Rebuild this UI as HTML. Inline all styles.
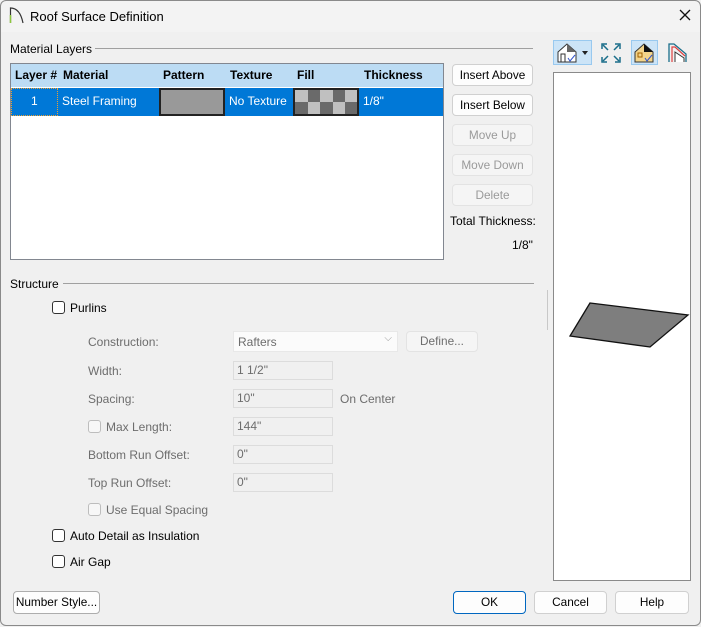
<!DOCTYPE html>
<html><head><style>
*{box-sizing:border-box}
body{margin:0;width:701px;height:626px;overflow:hidden;font-family:"Liberation Sans",sans-serif;font-size:12px;color:#000;background:#f0f0f0}
.win{position:absolute;left:1px;top:1px;width:701px;height:626px;background:#f0f0f0}
.frame{position:absolute;left:0;top:0;width:701px;height:626px;border:1px solid #8a8a8a;border-radius:6px;pointer-events:none}
.title{position:absolute;left:-1px;top:-1px;width:702px;height:32px;background:#f3f3f3}
.a{position:absolute;white-space:nowrap}
.btn{position:absolute;background:#fdfdfd;border:1px solid #d0d0d0;border-radius:4px;text-align:center;line-height:20px;font-size:11.8px}
.dis{color:#9a9a9a;background:#f5f5f5;border-color:#e3e3e3}
.g{color:#6d6d6d}
.inp{position:absolute;left:232px;width:100px;height:19px;border:1px solid #dcdcdc;background:#f0f0f0;color:#6d6d6d;padding-left:3px;line-height:17px}
.cb{position:absolute;width:13px;height:13px;border:1px solid #333;border-radius:3px;background:#fff}
.cbd{border-color:#bdbdbd;background:#f7f7f7}
.hd{position:absolute;top:67px;font-weight:bold}
.rw{position:absolute;top:93px;color:#fff}
</style></head><body><div class="win">
<div class="title"></div>
<svg class="a" style="left:8px;top:5px" width="16" height="18"><path d="M1.5 17V2 Q11 2 14 17" fill="none" stroke="#333" stroke-width="1.2"/><path d="M1.5 9V17" stroke="#8dc63f" stroke-width="1.5"/></svg>
<div class="a" style="left:29px;top:8px;font-size:13px">Roof Surface Definition</div>
<svg class="a" style="left:678px;top:8px" width="12" height="12"><path d="M1 1L11 11M11 1L1 11" stroke="#111" stroke-width="1.3"/></svg>

<div class="a" style="left:9px;top:41px">Material Layers</div>
<div class="a" style="left:94px;top:47px;width:438px;border-top:1px solid #a0a0a0"></div>
<div class="a" style="left:9px;top:62px;width:434px;height:197px;border:1px solid #828790;background:#fff"></div>
<div class="a" style="left:10px;top:63px;width:432px;height:23px;background:#bcdcf4"></div>
<div class="a" style="left:10px;top:87px;width:432px;height:28px;background:#0078d7"></div>
<div class="a" style="left:10px;top:87px;width:47px;height:28px;border:1px dotted #f0a030"></div>
<div class="hd" style="left:14px">Layer #</div><div class="hd" style="left:62px">Material</div><div class="hd" style="left:162px">Pattern</div><div class="hd" style="left:229px">Texture</div><div class="hd" style="left:296px">Fill</div><div class="hd" style="left:363px">Thickness</div>
<div class="rw" style="left:30px">1</div><div class="rw" style="left:61px">Steel Framing</div><div class="rw" style="left:228px">No Texture</div><div class="rw" style="left:362px">1/8"</div>
<div class="a" style="left:158px;top:87px;width:66px;height:28px;background:#999;border:2px solid #222"></div>
<svg class="a" style="left:292px;top:87px" width="66" height="28"><rect width="66" height="28" fill="#222"/><g transform="translate(2,2)"><rect width="62" height="24" fill="#c0c0c0"/><rect x="13" width="12" height="12" fill="#6a6a6a"/><rect x="38" width="12" height="12" fill="#6a6a6a"/><rect y="12" width="13" height="12" fill="#6a6a6a"/><rect x="25" y="12" width="13" height="12" fill="#6a6a6a"/><rect x="50" y="12" width="12" height="12" fill="#6a6a6a"/></g></svg>

<div class="btn" style="left:451px;top:63px;width:81px;height:22px">Insert Above</div>
<div class="btn" style="left:451px;top:93px;width:81px;height:22px">Insert Below</div>
<div class="btn dis" style="left:451px;top:123px;width:81px;height:22px">Move Up</div>
<div class="btn dis" style="left:451px;top:153px;width:81px;height:22px">Move Down</div>
<div class="btn dis" style="left:451px;top:183px;width:81px;height:22px">Delete</div>
<div class="a" style="left:449px;top:213px">Total Thickness:</div>
<div class="a" style="left:511px;top:237px">1/8"</div>

<div class="a" style="left:552px;top:39px;width:39px;height:25px;background:#cce4f7;border:1px solid #99c9ef"></div>
<svg class="a" style="left:555px;top:41px" width="38" height="22"><path d="M2 10L11 2L20 10V20H2Z" fill="#fff" stroke="#333"/><path d="M11 2L20 10H11Z" fill="#666"/><rect x="5" y="12" width="4" height="8" fill="none" stroke="#333"/><path d="M12 16L14 19L19 13" fill="none" stroke="#3355cc"/><path d="M26 9H32L29 13Z" fill="#222"/></svg>
<svg class="a" style="left:599px;top:41px" width="22" height="22"><g fill="none" stroke="#1a6e8a" stroke-width="1.5"><path d="M2 7V2H7M15 2H20V7M20 15V20H15M7 20H2V15"/><path d="M3 3L8 8M19 3L14 8M19 19L14 14M3 19L8 14"/></g></svg>
<div class="a" style="left:630px;top:39px;width:27px;height:25px;background:#cce4f7;border:1px solid #99c9ef"></div>
<svg class="a" style="left:632px;top:41px" width="24" height="22"><path d="M2 10L11 2L20 10V20H2Z" fill="#f3d48a" stroke="#333"/><path d="M11 2L20 10H11Z" fill="#111"/><rect x="5" y="11" width="4" height="4" fill="none" stroke="#a06000"/><path d="M12 16L14 19L19 13" fill="none" stroke="#3355cc"/></svg>
<svg class="a" style="left:665px;top:39px" width="24" height="24"><path d="M3 22V4H8L20 14V22" fill="none" stroke="#1a6e8a" stroke-width="1.3"/><path d="M6 22V7H9L19 16" fill="none" stroke="#e04040" stroke-width="1.2"/><path d="M9 22V12L18 18V22" fill="#fff" stroke="#333"/></svg>

<div class="a" style="left:552px;top:71px;width:138px;height:509px;background:#fff;border:1px solid #8a8a8a"></div>
<svg class="a" style="left:559px;top:294px" width="130" height="60"><path d="M30 8L128 20L90 52L10 41Z" fill="#7e7e7e" stroke="#111" stroke-width="1.3"/></svg>
<div class="a" style="left:546px;top:289px;height:40px;border-left:1px solid #c8c8c8"></div>

<div class="a" style="left:9px;top:276px">Structure</div>
<div class="a" style="left:62px;top:282px;width:471px;border-top:1px solid #a0a0a0"></div>
<div class="cb" style="left:51px;top:300px"></div><div class="a" style="left:69px;top:300px">Purlins</div>
<div class="a g" style="left:87px;top:334px">Construction:</div>
<div class="a" style="left:232px;top:330px;width:165px;height:21px;background:#fbfbfb;border:1px solid #e8e8e8;color:#6d6d6d;padding:3px 4px">Rafters<span style="position:absolute;right:5px;top:1px;font-size:10px;color:#999">⌵</span></div>
<div class="btn dis" style="left:405px;top:330px;width:72px;height:21px;color:#6d6d6d;line-height:19px">Define...</div>
<div class="a g" style="left:87px;top:363px">Width:</div><div class="inp" style="top:360px">1 1/2"</div>
<div class="a g" style="left:87px;top:391px">Spacing:</div><div class="inp" style="top:388px">10"</div><div class="a g" style="left:339px;top:391px">On Center</div>
<div class="cb cbd" style="left:87px;top:419px"></div><div class="a g" style="left:105px;top:419px">Max Length:</div><div class="inp" style="top:416px">144"</div>
<div class="a g" style="left:87px;top:447px">Bottom Run Offset:</div><div class="inp" style="top:444px">0"</div>
<div class="a g" style="left:87px;top:475px">Top Run Offset:</div><div class="inp" style="top:472px">0"</div>
<div class="cb cbd" style="left:87px;top:502px"></div><div class="a g" style="left:105px;top:502px">Use Equal Spacing</div>
<div class="cb" style="left:51px;top:528px"></div><div class="a" style="left:69px;top:528px">Auto Detail as Insulation</div>
<div class="cb" style="left:51px;top:554px"></div><div class="a" style="left:69px;top:554px">Air Gap</div>

<div class="btn" style="left:12px;top:590px;width:87px;height:23px;line-height:21px;border-color:#adadad">Number Style...</div>
<div class="btn" style="left:452px;top:590px;width:73px;height:23px;line-height:21px;border:1px solid #0067c0">OK</div>
<div class="btn" style="left:533px;top:590px;width:73px;height:23px;line-height:21px">Cancel</div>
<div class="btn" style="left:614px;top:590px;width:74px;height:23px;line-height:21px">Help</div>
</div><div class="frame"></div></body></html>
